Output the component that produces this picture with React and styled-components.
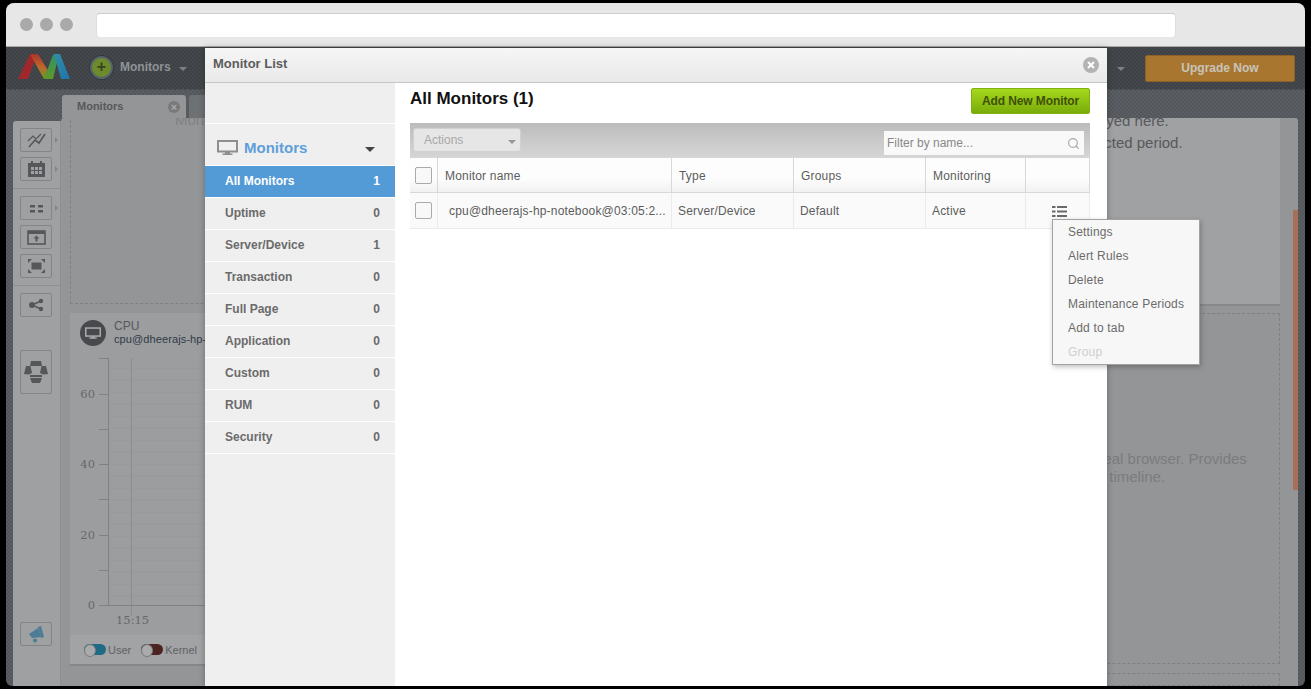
import React from "react";
import styled, { createGlobalStyle } from "styled-components";
import { Search } from "lucide-react";

const GlobalStyle = createGlobalStyle`
  html, body {
    margin: 0;
    padding: 0;
    height: 100%;
    background: #000;
    overflow: hidden;
    font-family: "Liberation Sans", Arial, sans-serif;
  }
  * { box-sizing: border-box; }
`;

const checker = (a, b) => `repeating-conic-gradient(${a} 0 25%, ${b} 0 50%) 0 0 / 4px 4px`;

const Frame = styled.div`
  position: relative;
  margin: 3px 6px 0;
  width: 1299px;
  height: 683px;
  border-radius: 8px 8px 6px 6px;
  overflow: hidden;
  display: flex;
  flex-direction: column;
  background: ${checker("#53575c", "#5b5f64")};
`;

const BrowserBar = styled.div`
  flex: 0 0 44px;
  display: flex;
  align-items: center;
  padding: 0 0 0 14px;
  background: #e7e7e7;
  border-bottom: 1px solid #aaa;
`;

const Dot = styled.span`
  width: 13px;
  height: 13px;
  margin-right: 7px;
  border-radius: 50%;
  background: #a9a9a9;
`;

const UrlBar = styled.div`
  width: 1080px;
  height: 24px;
  margin: 0 0 0 16px;
  border-radius: 4px;
  background: #fff;
  border-top: 1px solid #ccc;
  border-left: 1px solid #ddd;
  border-right: 1px solid #ddd;
`;

const AppHeader = styled.header`
  flex: 0 0 43px;
  display: flex;
  align-items: center;
  padding: 0 10px 2px 11px;
  background: ${checker("#3e4246", "#44484c")};
  border-bottom: 1px dashed #4f5b5a;
`;

const Logo = styled.svg`
  width: 54px;
  height: 26px;
  margin-right: 19px;
`;

const PlusButton = styled.div`
  width: 23px;
  height: 23px;
  border-radius: 50%;
  background: #6d8a2c;
  border: 2px solid #56636a;
  box-shadow: 0 0 0 1px #34373a;
  display: flex;
  align-items: center;
  justify-content: center;
  color: #37421f;
  font: bold 16px/1 "Liberation Sans", sans-serif;
`;

const HeaderLink = styled.span`
  margin-left: 7px;
  font-size: 12px;
  font-weight: bold;
  color: #8f9295;
`;

const Caret = styled.span`
  display: inline-block;
  width: 0;
  height: 0;
  margin-left: ${(p) => p.$gap || 8}px;
  margin-top: 3px;
  border-left: ${(p) => p.$size || 4}px solid transparent;
  border-right: ${(p) => p.$size || 4}px solid transparent;
  border-top: ${(p) => p.$size || 4}px solid ${(p) => p.$color || "#7e8184"};
`;

const HeaderSpacer = styled.div`
  flex: 1;
`;

const UpgradeButton = styled.div`
  width: 150px;
  height: 27px;
  margin: 2px 0 0 20px;
  border-radius: 2px;
  background: #a9762f;
  border: 1px solid #8f6124;
  color: #c7c4bc;
  font-size: 12px;
  font-weight: bold;
  display: flex;
  align-items: center;
  justify-content: center;
`;

const TabRow = styled.div`
  flex: 0 0 28px;
  display: flex;
  align-items: flex-end;
  padding-left: 56px;
  gap: 3px;
`;

const Tab = styled.div`
  width: ${(p) => p.$width}px;
  height: 23px;
  padding: 0 6px 2px 15px;
  border-radius: 3px 3px 0 0;
  background: ${(p) => (p.$active ? "#949597" : "#6e7174")};
  display: flex;
  align-items: center;
  justify-content: space-between;
  color: #56585a;
  font-size: 11px;
  font-weight: bold;
`;

const TabClose = styled.span`
  width: 12px;
  height: 12px;
  margin-top: 2px;
  border-radius: 50%;
  background: #77797b;
  color: #a8a9ab;
  font-size: 11px;
  line-height: 12px;
  text-align: center;
`;

const Workspace = styled.div`
  flex: 1;
  min-height: 0;
  display: flex;
  padding-left: 7px;
`;

const Rail = styled.aside`
  flex: 0 0 48px;
  margin-top: 3px;
  border-radius: 3px 0 0 0;
  background: #9fa0a2;
  border-right: 1px solid #8e8f91;
  display: flex;
  flex-direction: column;
  padding-top: 7px;
`;

const RailGroup = styled.div`
  display: flex;
  flex-direction: column;
  gap: 5px;
  padding: 0 0 7px 7px;
  margin-top: ${(p) => p.$push || 0}px;
  margin-bottom: 7px;
  border-bottom: ${(p) => (p.$plain ? "none" : "1px solid #8e8f91")};
`;

const RailButton = styled.div`
  position: relative;
  width: 32px;
  height: ${(p) => p.$height || 24}px;
  border: 1px solid #838486;
  border-radius: 2px;
  display: flex;
  align-items: center;
  justify-content: center;
  ${(p) =>
    p.$arrow &&
    `&::after {
      content: "";
      position: absolute;
      right: -7px;
      top: 8px;
      border-left: 3px solid #838486;
      border-top: 3px solid transparent;
      border-bottom: 3px solid transparent;
    }`}
`;

const RailFoot = styled.div`
  margin-top: auto;
  padding: 0 0 40px 7px;
`;

const Panel = styled.main`
  flex: 1;
  position: relative;
  display: grid;
  grid-template-columns: 515px 686px 1fr;
  grid-template-rows: 184px 351px 1fr;
  column-gap: 9px;
  row-gap: 9px;
  padding: 2px 0 0 9px;
  margin-right: 7px;
  border-radius: 3px 3px 0 0;
  background: #949597;
  overflow: hidden;
`;

const GhostCard = styled.div`
  border: 1px dashed #7e8082;
  border-top: ${(p) => (p.$open ? "1px dashed #7e8082" : "none")};
  padding: ${(p) => p.$pad || "0"};
  color: #7a7c7e;
  font-size: 15px;
  line-height: 18px;
  grid-column: ${(p) => p.$col || "auto"};
`;

const GhostTitle = styled.div`
  margin: -9px 0 0 104px;
  font-size: 15px;
  color: #7f8183;
`;

const NoteCard = styled.div`
  grid-column: 2;
  margin-top: -2px;
  background: #a0a1a3;
  box-shadow: 0 2px 0 #87888a;
  overflow: hidden;
`;

const NoteText = styled.p`
  margin: -8px 0 0;
  padding-left: 336px;
  color: #57595b;
  font-size: 15px;
  line-height: 22px;
  white-space: nowrap;
`;

const ScrollThumb = styled.div`
  grid-column: 3;
  grid-row: 1 / 3;
  justify-self: end;
  width: 5px;
  height: 280px;
  margin-top: 90px;
  background: #a86f58;
`;

const CpuCard = styled.section`
  background: #9c9d9f;
  box-shadow: 0 2px 0 #85878a;
  display: flex;
  flex-direction: column;
`;

const CpuHead = styled.div`
  display: flex;
  padding: 7px 10px 0;
  gap: 8px;
  height: 45px;
`;

const CpuBadge = styled.div`
  width: 26px;
  height: 26px;
  border-radius: 50%;
  background: #47494c;
  display: flex;
  align-items: center;
  justify-content: center;
`;

const CpuText = styled.div`
  font-size: 12px;
  line-height: 13px;
  color: #55585b;
`;

const CpuName = styled.div`
  font-size: 11px;
  letter-spacing: 0.1px;
  color: #2f3b47;
  white-space: nowrap;
`;

const ChartArea = styled.svg`
  display: block;
  flex: 0 0 277px;
  width: 100%;
  height: 277px;
`;

const Legend = styled.div`
  flex: 1;
  display: flex;
  align-items: center;
  gap: 2px;
  padding-left: 14px;
  background: #a2a3a5;
  color: #5f6163;
  font-size: 11px;
`;

const Toggle = styled.span`
  position: relative;
  width: 22px;
  height: 11px;
  border-radius: 6px;
  margin-left: ${(p) => p.$gap || 0}px;
  background: ${(p) => p.$color};
  &::before {
    content: "";
    position: absolute;
    left: 0;
    top: 0;
    width: 10px;
    height: 11px;
    border-radius: 50%;
    background: #a9aaab;
    border: 1px solid #77797b;
  }
`;

const Modal = styled.div`
  position: absolute;
  left: 199px;
  top: 45px;
  width: 902px;
  height: 640px;
  display: flex;
  flex-direction: column;
  background: #fff;
  box-shadow: 0 0 6px rgba(0, 0, 0, 0.3);
`;

const ModalHead = styled.div`
  flex: 0 0 35px;
  display: flex;
  align-items: center;
  justify-content: space-between;
  padding: 0 8px 3px;
  background: linear-gradient(#f6f6f6, #e9e9e9);
  border-bottom: 1px solid #c6c6c6;
  color: #5c5c5c;
  font-size: 13px;
  font-weight: bold;
`;

const CloseDot = styled.span`
  width: 16px;
  height: 16px;
  margin-top: 2px;
  border-radius: 50%;
  background: #b3b3b3;
  color: #fff;
  display: flex;
  align-items: center;
  justify-content: center;
`;

const ModalBody = styled.div`
  flex: 1;
  display: flex;
  min-height: 0;
`;

const Sidebar = styled.nav`
  flex: 0 0 190px;
  background: #efefef;
  padding-top: 40px;
`;

const SideTitle = styled.div`
  height: 43px;
  display: flex;
  align-items: center;
  padding: 6px 20px 0 12px;
  border-top: 1px solid #fff;
  border-bottom: 1px solid #fff;
  color: #5e9fd9;
  font-size: 15px;
  font-weight: bold;
`;

const SideLabel = styled.span`
  flex: 1;
  margin-left: 6px;
`;

const SideItem = styled.div`
  height: 32px;
  display: flex;
  align-items: center;
  justify-content: space-between;
  padding: 0 15px 1px 20px;
  border-bottom: 1px solid #fff;
  background: ${(p) => (p.$active ? "#529bd6" : "transparent")};
  color: ${(p) => (p.$active ? "#fff" : "#6b6b6b")};
  font-size: 12px;
  font-weight: bold;
`;

const Content = styled.div`
  position: relative;
  flex: 1;
  padding: 0 17px 0 15px;
`;

const TitleRow = styled.div`
  height: 40px;
  display: flex;
  justify-content: space-between;
  padding-top: 5px;
`;

const PageTitle = styled.h1`
  margin: 1px 0 0;
  font-size: 17px;
  line-height: 20px;
  color: #111;
`;

const AddButton = styled.div`
  width: 119px;
  height: 26px;
  border-radius: 2px;
  background: linear-gradient(#a5d81c, #79ac0a);
  border: 1px solid #82b010;
  color: #3e5006;
  font-size: 12px;
  font-weight: bold;
  letter-spacing: -0.1px;
  display: flex;
  align-items: center;
  justify-content: center;
`;

const Toolbar = styled.div`
  height: 35px;
  display: flex;
  justify-content: space-between;
  padding: 5px 6px 0 3px;
  background: linear-gradient(#bcbcbc, #d6d6d6);
`;

const ActionSelect = styled.div`
  width: 108px;
  height: 24px;
  padding: 0 4px 0 10px;
  border-radius: 3px;
  background: #e6e6e6;
  border: 1px solid #d0d0d0;
  display: flex;
  align-items: center;
  justify-content: space-between;
  color: #a8a8a8;
  font-size: 12px;
`;

const FilterBox = styled.div`
  width: 200px;
  height: 24px;
  margin-top: 3px;
  padding: 0 4px 0 3px;
  background: #f9f9f9;
  display: flex;
  align-items: center;
  justify-content: space-between;
  color: #888;
  font-size: 12px;
`;

const Row = styled.div`
  display: grid;
  grid-template-columns: 28px 234px 122px 132px 100px 64px;
  height: ${(p) => (p.$head ? 35 : 36)}px;
  background: ${(p) => (p.$head ? "linear-gradient(#fdfdfd 60%, #f1f1f1)" : "#fafafa")};
  border-bottom: 1px solid ${(p) => (p.$head ? "#d8d8d8" : "#ebebeb")};
  color: #5c5c5c;
  font-size: 12px;
  letter-spacing: 0.18px;
`;

const Cell = styled.div`
  display: flex;
  align-items: center;
  padding-left: ${(p) => p.$pad ?? 7}px;
  border-right: 1px solid ${(p) => (p.$head ? "#d8d8d8" : "#ebebeb")};
  white-space: nowrap;
  overflow: hidden;
`;

const HeadLabel = styled.span`
  margin-top: 2px;
`;

const CheckBox = styled.span`
  width: 17px;
  height: 17px;
  border: 1px solid #aaa;
  border-radius: 2px;
  background: #f8f8f8;
`;

const ContextMenu = styled.ul`
  position: absolute;
  left: 657px;
  top: 136px;
  width: 148px;
  margin: 0;
  padding: 0;
  list-style: none;
  background: #f7f7f7;
  border: 1px solid #a2a2a2;
  box-shadow: 1px 2px 5px rgba(0, 0, 0, 0.25);
`;

const MenuItem = styled.li`
  height: 24px;
  padding-left: 15px;
  line-height: 25px;
  font-size: 12px;
  letter-spacing: 0.18px;
  color: ${(p) => (p.$disabled ? "#cfcfcf" : "#6b6b6b")};
`;

const ListIconSvg = styled.svg`
  width: 15px;
  height: 11px;
  margin: 13px 0 0 19px;
  align-self: flex-start;
`;

const railInk = "#55575a";
const railBg = "#9fa0a2";

function LogoMark() {
  return (
    <Logo viewBox="0 0 54 26">
      <defs>
        <linearGradient id="lgA" x1="0" x2="0" y1="0" y2="1">
          <stop offset="0" stopColor="#a8352b" />
          <stop offset="0.5" stopColor="#c2652a" />
          <stop offset="1" stopColor="#6d9a2a" />
        </linearGradient>
        <linearGradient id="lgB" x1="0" x2="0" y1="0" y2="1">
          <stop offset="0" stopColor="#2f8f6a" />
          <stop offset="1" stopColor="#5f9a28" />
        </linearGradient>
        <linearGradient id="lgC" x1="0" x2="1" y1="0" y2="1">
          <stop offset="0" stopColor="#2f8fa8" />
          <stop offset="1" stopColor="#2272a8" />
        </linearGradient>
      </defs>
      <path d="M1 25 L12 2 Q13 0 16 0 L20 0 L11 25 Z" fill="#a0282c" />
      <path d="M13 0 L21 0 L36 25 L27 25 Z" fill="url(#lgA)" />
      <path d="M27 25 L35 3 Q36 0 39 0 L42 0 L36 25 Z" fill="url(#lgB)" />
      <path d="M37 0 L43 0 L53 25 L44 25 Z" fill="url(#lgC)" />
    </Logo>
  );
}

function RailIcon({ kind }) {
  const shapes = {
    chart: (
      <>
        <path d="M1 10 L6 5 L9 8 L14 3" fill="none" stroke={railInk} strokeWidth="1.2" />
        <path d="M2 16 L8 9 L12 12 L18 3" fill="none" stroke={railInk} strokeWidth="1.6" />
      </>
    ),
    calendar: (
      <>
        <path d="M1 3h17v14H1z" fill={railInk} />
        <path d="M4 1h2v3H4zM13 1h2v3h-2z" fill={railInk} />
        <path
          d="M4 7h3v3H4zM8 7h3v3H8zM12 7h3v3h-3zM4 11h3v3H4zM8 11h3v3H8zM12 11h3v3h-3z"
          fill={railBg}
        />
      </>
    ),
    layout: <path d="M3 6h5v2.5H3zM11 6h5v2.5h-5zM3 11h5v2.5H3zM11 11h5v2.5h-5z" fill={railInk} />,
    upload: (
      <>
        <rect x="1" y="3" width="17" height="13" fill="none" stroke={railInk} strokeWidth="1.6" />
        <path d="M1 3h17v3H1z" fill={railInk} />
        <path d="M9.5 7.5l3 3h-2v3h-2v-3h-2z" fill={railInk} />
      </>
    ),
    expand: (
      <>
        <rect x="4.5" y="5.5" width="10" height="7" fill={railInk} />
        <path d="M1 2h4L1 6zM18 2h-4l4 4zM1 16h4l-4-4zM18 16h-4l4-4z" fill={railInk} />
      </>
    ),
    share: (
      <>
        <path d="M5 9L14 5M5 9l9 4" stroke={railInk} strokeWidth="1.4" />
        <circle cx="5" cy="9" r="3" fill={railInk} />
        <circle cx="14" cy="5" r="2.2" fill={railInk} />
        <circle cx="14" cy="13" r="2.2" fill={railInk} />
      </>
    ),
  };
  return (
    <svg width="19" height="18" viewBox="0 0 19 18">
      {shapes[kind]}
    </svg>
  );
}

function SpotlightIcon() {
  return (
    <svg width="24" height="22" viewBox="0 0 24 22">
      <path d="M7 0h10l1 5H6z" fill={railInk} />
      <path d="M2 5h4.5l1.5 7-3 1.5L0 13z" fill={railInk} />
      <path d="M22 5h-4.5L16 12l3 1.5 5-.5z" fill={railInk} />
      <path d="M6 14h12v2H6z" fill={railInk} />
      <path d="M6 17h12l-2 5H8z" fill={railInk} />
    </svg>
  );
}

function MegaphoneIcon() {
  return (
    <svg width="17" height="17" viewBox="0 0 17 17">
      <path d="M1 8l9-6 3 9-9 1z" fill="#4c7c96" />
      <path d="M10 1l3-1 3 11-3 1z" fill="#4c7c96" />
      <circle cx="7" cy="14.5" r="2" fill="#4c7c96" />
    </svg>
  );
}

function MonitorIcon({ color, width = 21, height = 15 }) {
  return (
    <svg width={width} height={height} viewBox="0 0 21 15">
      <rect x="1" y="1" width="19" height="10.5" fill="none" stroke={color} strokeWidth="2" />
      <path d="M8 12h5v1.5h2.5V15h-10v-1.5H8z" fill={color} />
    </svg>
  );
}

function ListIcon() {
  return (
    <ListIconSvg viewBox="0 0 15 11">
      <path
        d="M0 0h3.5v2H0zM5 0h10v2H5zM0 4.5h3.5v2H0zM5 4.5h10v2H5zM0 9h3.5v2H0zM5 9h10v2H5z"
        fill="#6a6a6a"
      />
    </ListIconSvg>
  );
}

function CpuChart() {
  const minor = [];
  for (let y = 10; y < 247; y += 12) minor.push(y);
  return (
    <ChartArea viewBox="0 0 515 277" preserveAspectRatio="xMinYMin slice">
      {minor.map((y) => (
        <line key={y} x1="39" x2="515" y1={y} y2={y} stroke="#97989a" strokeWidth="1" />
      ))}
      <line x1="61.5" x2="61.5" y1="0" y2="258" stroke="#8b8c8e" />
      <line x1="38.5" x2="38.5" y1="0" y2="247" stroke="#808183" />
      <line x1="29" x2="515" y1="247.5" y2="247.5" stroke="#808183" />
      {[
        [0, ""],
        [36, "60"],
        [71, ""],
        [106, "40"],
        [141, ""],
        [177, "20"],
        [212, ""],
        [247, "0"],
      ].map(([y, label]) => (
        <g key={y}>
          <line x1="29" x2="38" y1={y + 0.5} y2={y + 0.5} stroke="#808183" />
          <text
            x="25"
            y={y + 4}
            textAnchor="end"
            fontFamily="DejaVu Serif, serif"
            fontSize="11.5"
            fill="#66686a"
          >
            {label}
          </text>
        </g>
      ))}
      <text x="46" y="266" fontFamily="DejaVu Serif, serif" fontSize="11.5" fill="#66686a">
        15:15
      </text>
    </ChartArea>
  );
}

const sideItems = [
  ["All Monitors", 1],
  ["Uptime", 0],
  ["Server/Device", 1],
  ["Transaction", 0],
  ["Full Page", 0],
  ["Application", 0],
  ["Custom", 0],
  ["RUM", 0],
  ["Security", 0],
];

const menuItems = ["Settings", "Alert Rules", "Delete", "Maintenance Periods", "Add to tab"];

export default function App() {
  return (
    <>
      <GlobalStyle />
      <Frame>
        <BrowserBar>
          <Dot />
          <Dot />
          <Dot />
          <UrlBar />
        </BrowserBar>
        <AppHeader>
          <LogoMark />
          <PlusButton>+</PlusButton>
          <HeaderLink>Monitors</HeaderLink>
          <Caret />
          <HeaderSpacer />
          <Caret />
          <UpgradeButton>Upgrade Now</UpgradeButton>
        </AppHeader>
        <TabRow>
          <Tab $active $width={124}>
            Monitors
            <TabClose>×</TabClose>
          </Tab>
          <Tab $width={60} />
        </TabRow>
        <Workspace>
          <Rail>
            <RailGroup>
              <RailButton $arrow>
                <RailIcon kind="chart" />
              </RailButton>
              <RailButton $arrow>
                <RailIcon kind="calendar" />
              </RailButton>
            </RailGroup>
            <RailGroup>
              <RailButton $arrow>
                <RailIcon kind="layout" />
              </RailButton>
              <RailButton>
                <RailIcon kind="upload" />
              </RailButton>
              <RailButton>
                <RailIcon kind="expand" />
              </RailButton>
            </RailGroup>
            <RailGroup $plain>
              <RailButton>
                <RailIcon kind="share" />
              </RailButton>
            </RailGroup>
            <RailGroup $plain $push={19}>
              <RailButton $height={44}>
                <SpotlightIcon />
              </RailButton>
            </RailGroup>
            <RailFoot>
              <RailButton>
                <MegaphoneIcon />
              </RailButton>
            </RailFoot>
          </Rail>
          <Panel>
            <GhostCard>
              <GhostTitle>Monitors</GhostTitle>
            </GhostCard>
            <NoteCard>
              <NoteText>
                Your monitor data is displayed here.
                <br />
                Metrics shown for the selected period.
              </NoteText>
            </NoteCard>
            <ScrollThumb />
            <CpuCard>
              <CpuHead>
                <CpuBadge>
                  <MonitorIcon color="#a9aaab" width={16} height={12} />
                </CpuBadge>
                <CpuText>
                  CPU
                  <CpuName>cpu@dheerajs-hp-notebook</CpuName>
                </CpuText>
              </CpuHead>
              <CpuChart />
              <Legend>
                <Toggle $color="#1f6a85" />
                User
                <Toggle $color="#4d2322" $gap={8} />
                Kernel
              </Legend>
            </CpuCard>
            <GhostCard $open $pad="136px 0 0 365px">
              Runs your page in a real browser. Provides
              <br />
              with the full page load timeline.
            </GhostCard>
            <GhostCard $open $col="2" />
          </Panel>
        </Workspace>
        <Modal>
          <ModalHead>
            Monitor List
            <CloseDot>
              <svg width="8" height="8" viewBox="0 0 8 8">
                <path d="M1 1l6 6M7 1L1 7" stroke="#fff" strokeWidth="2" />
              </svg>
            </CloseDot>
          </ModalHead>
          <ModalBody>
            <Sidebar>
              <SideTitle>
                <MonitorIcon color="#8e8e8e" />
                <SideLabel>Monitors</SideLabel>
                <Caret $color="#444" $size={5} />
              </SideTitle>
              {sideItems.map(([label, count], i) => (
                <SideItem key={label} $active={i === 0}>
                  <span>{label}</span>
                  <span>{count}</span>
                </SideItem>
              ))}
            </Sidebar>
            <Content>
              <TitleRow>
                <PageTitle>All Monitors (1)</PageTitle>
                <AddButton>Add New Monitor</AddButton>
              </TitleRow>
              <Toolbar>
                <ActionSelect>
                  Actions
                  <Caret $color="#999" />
                </ActionSelect>
                <FilterBox>
                  Filter by name...
                  <Search size={13} color="#a8a8a8" strokeWidth={2.2} />
                </FilterBox>
              </Toolbar>
              <Row $head>
                <Cell $head $pad={5}>
                  <CheckBox />
                </Cell>
                <Cell $head>
                  <HeadLabel>Monitor name</HeadLabel>
                </Cell>
                <Cell $head>
                  <HeadLabel>Type</HeadLabel>
                </Cell>
                <Cell $head>
                  <HeadLabel>Groups</HeadLabel>
                </Cell>
                <Cell $head>
                  <HeadLabel>Monitoring</HeadLabel>
                </Cell>
                <Cell $head />
              </Row>
              <Row>
                <Cell $pad={5}>
                  <CheckBox />
                </Cell>
                <Cell $pad={11}>cpu@dheerajs-hp-notebook@03:05:2...</Cell>
                <Cell $pad={6}>Server/Device</Cell>
                <Cell $pad={6}>Default</Cell>
                <Cell $pad={6}>Active</Cell>
                <Cell>
                  <ListIcon />
                </Cell>
              </Row>
              <ContextMenu>
                {menuItems.map((item) => (
                  <MenuItem key={item}>{item}</MenuItem>
                ))}
                <MenuItem $disabled>Group</MenuItem>
              </ContextMenu>
            </Content>
          </ModalBody>
        </Modal>
      </Frame>
    </>
  );
}
